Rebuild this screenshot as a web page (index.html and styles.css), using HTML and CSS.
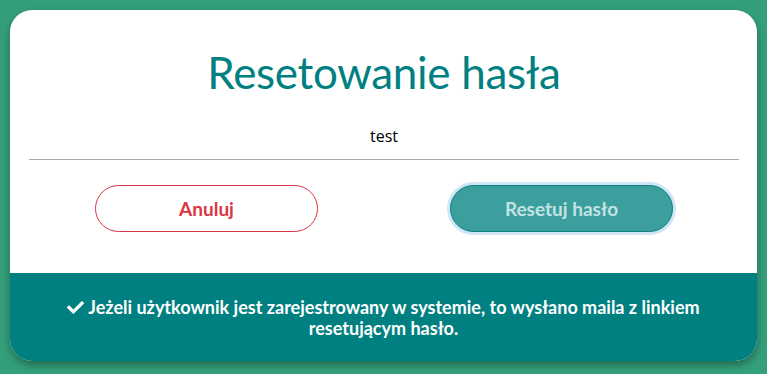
FILE: index.html
```html
<!DOCTYPE html>
<html lang="pl">
<head>
    <meta charset="UTF-8">
    <meta name="viewport" content="width=device-width, initial-scale=1.0">
    <title>Resetowanie hasła</title>
    <link rel="stylesheet" href="styles.css">
</head>
<body>
    <div class="reset-card">
        <div class="reset-body">
            <h1>Resetowanie hasła</h1>
            <form id="resetForm">
                <input type="text" class="login-input" value="test">
                <div class="button-row">
                    <div class="button-cell">
                        <button type="button" class="btn btn-cancel">Anuluj</button>
                    </div>
                    <div class="button-cell">
                        <button type="submit" class="btn btn-reset" disabled>Resetuj hasło</button>
                    </div>
                </div>
            </form>
        </div>
        <div class="reset-footer">
            <svg class="check-icon" viewBox="0 0 512 512" width="17" height="17">
                <path fill="#fff" d="M173.9 439.4L7.5 273c-10-10-10-26.2 0-36.2l36.2-36.2c10-10 26.2-10 36.2 0L192 312.7 432.1 72.6c10-10 26.2-10 36.2 0l36.2 36.2c10 10 10 26.2 0 36.2L210.1 439.4c-10 10-26.2 10-36.2 0z"/>
            </svg>
            Jeżeli użytkownik jest zarejestrowany w systemie, to wysłano maila z linkiem resetującym hasło.
        </div>
    </div>
</body>
</html>
```

FILE: styles.css
```css
body {
    margin: 0;
    padding: 10px;
    background-color: #34a07b;
    font-family: Lato, "Open Sans", sans-serif;
}

.reset-card {
    background: #fff;
    border-radius: 22px;
    overflow: hidden;
    box-shadow: 0 4px 8px rgba(0, 0, 0, 0.35);
}

.reset-body {
    padding: 0 18px 0 19px;
    height: 263px;
}

.reset-body h1 {
    margin: 0;
    padding-top: 32px;
    height: 76px;
    text-align: center;
    font-weight: 400;
    font-size: 44px;
    line-height: 60px;
    color: #008080;
    letter-spacing: -0.3px;
}

.login-input {
    display: block;
    box-sizing: border-box;
    width: 100%;
    height: 42px;
    padding: 0 0 6px;
    border: none;
    border-bottom: 1px solid #aaa;
    text-align: center;
    font-family: "Open Sans", sans-serif;
    font-size: 16px;
    color: #000;
    outline: none;
}

.button-row {
    display: flex;
    margin-top: 25px;
}

.button-cell {
    flex: 1;
    display: flex;
    justify-content: center;
}

.btn {
    width: 223px;
    height: 47px;
    border-radius: 24px;
    font-family: Lato, sans-serif;
    font-weight: 700;
    font-size: 19px;
    cursor: pointer;
}

.btn-cancel {
    background: #fff;
    border: 1px solid #dc3545;
    color: #dc3545;
}

.btn-reset {
    background: #3d9e9e;
    border: 1px solid #0a7f7f;
    color: #c2e3e3;
    box-shadow: 0 0 0 3px #cfe6f7;
}

.reset-footer {
    background: #008080;
    color: #fff;
    font-weight: 700;
    font-size: 18px;
    line-height: 21px;
    text-align: center;
    padding: 24px 55px 22px;
}

.check-icon {
    vertical-align: -2px;
}
```
